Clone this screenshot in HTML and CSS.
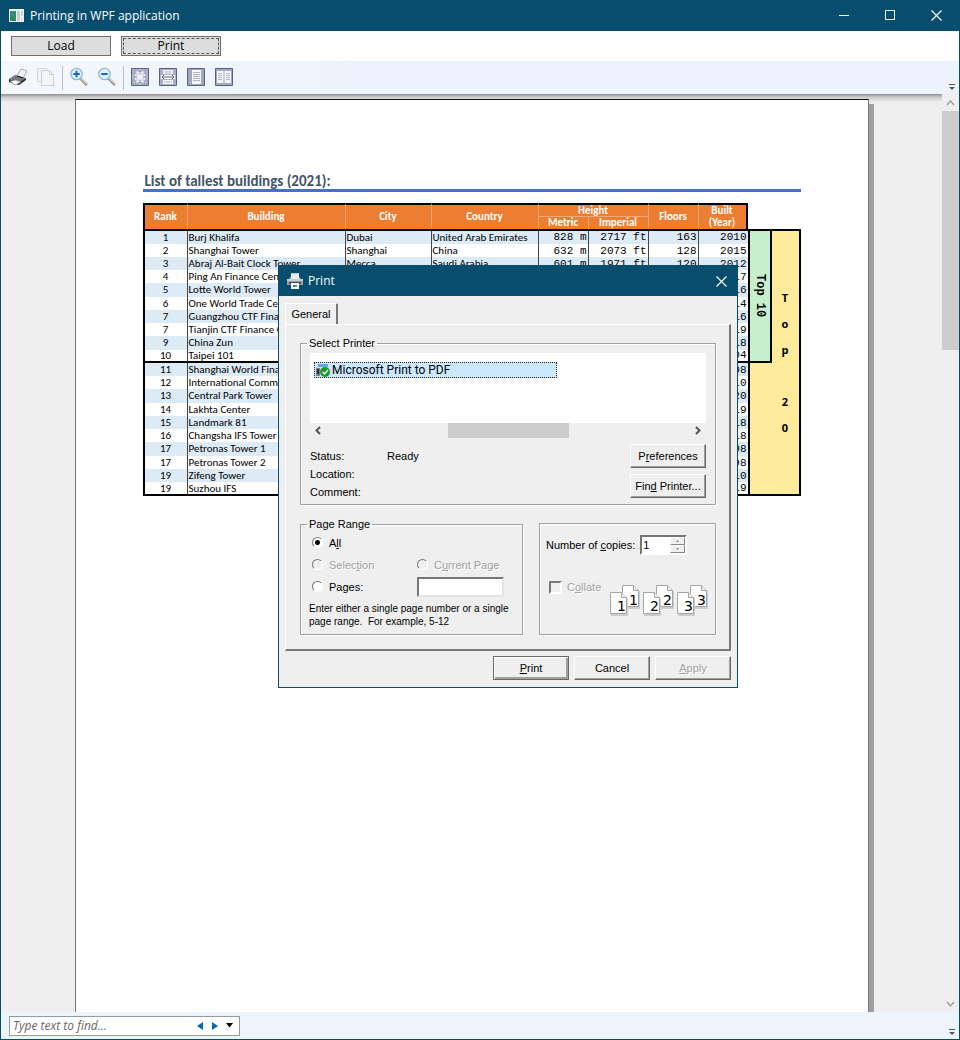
FILE: index.html
```html
<!DOCTYPE html>
<html lang="en">
<head>
<meta charset="utf-8">
<title>Printing in WPF application</title>
<link rel="stylesheet" href="styles.css">
</head>
<body>
<div class="window">
  <header class="titlebar">
    <svg class="app-icon" width="15" height="13" viewBox="0 0 15 13"><path fill="#f4f6f6" d="M0 0h15v13H0z"/><path fill="#2e8a63" d="M1 2h6v10H1z"/><path fill="#4f7fa0" d="M2 2h3v5H2z"/><path fill="#c9cfd2" d="M8 2h3v10H8zM12 2h2v5h-2z"/><path fill="#dfe3e5" d="M12 8h2v4h-2z"/></svg>
    <h1 class="window-title">Printing in WPF application</h1>
    <div class="window-controls">
      <button class="caption-button" aria-label="Minimize"><svg width="11" height="11" viewBox="0 0 11 11"><path d="M0 5.500h10" stroke="#fff"/></svg></button>
      <button class="caption-button" aria-label="Maximize"><svg width="11" height="11" viewBox="0 0 11 11"><path d="M.5.5h9v9h-9z" fill="none" stroke="#fff"/></svg></button>
      <button class="caption-button" aria-label="Close"><svg width="11" height="11" viewBox="0 0 11 11"><path d="M.5.5l10 10M10.500.5l-10 10" stroke="#fff" stroke-width="1.200"/></svg></button>
    </div>
  </header>

  <div class="commands">
    <button class="command">Load</button>
    <button class="command command-focused">Print</button>
  </div>

  <div class="toolbar">
    <button class="tool" aria-label="Print"><svg width="20" height="20" viewBox="0 0 20 20"><path d="M9 9l4-7 6 2-4 7z" fill="#f2f3f5" stroke="#8a8d92" stroke-width=".7"/><path d="M1 12l6-4 11 3-5 4z" fill="#77797e"/><path d="M1 12v3l10 3 7-5v-2l-6 4z" fill="#26272b"/><path d="M2 14l6-1 5 2-6 3z" fill="#fff" stroke="#777" stroke-width=".6"/><path d="M9 9l6 2" stroke="#222" stroke-width="1.300"/></svg></button>
    <button class="tool" aria-label="Copy"><svg width="20" height="20" viewBox="0 0 20 20"><path d="M1.500 1.500h9l4 4v9h-13z" fill="#f2f4f8" stroke="#d3d6db"/><path d="M5.500 3.500h8l4 4v11h-12z" fill="#f4f6f9" stroke="#cdd0d6"/><path d="M13.500 3.500v4h4" fill="none" stroke="#cdd0d6"/></svg></button>
    <span class="tool-separator"></span>
    <button class="tool" aria-label="Zoom in"><svg width="20" height="20" viewBox="0 0 20 20"><path d="M11 11l7 7" stroke="#a5a098" stroke-width="3"/><path d="M12 11l6 6" stroke="#eee3cf" stroke-width="1"/><circle cx="7.500" cy="7" r="5.700" fill="#e0f0fc" stroke="#8db9dc" stroke-width="1.300"/><path d="M7.500 3.800v6.400M4.300 7h6.400" stroke="#1668c0" stroke-width="2"/></svg></button>
    <button class="tool" aria-label="Zoom out"><svg width="20" height="20" viewBox="0 0 20 20"><path d="M11 11l7 7" stroke="#a5a098" stroke-width="3"/><path d="M12 11l6 6" stroke="#eee3cf" stroke-width="1"/><circle cx="7.500" cy="7" r="5.700" fill="#e0f0fc" stroke="#8db9dc" stroke-width="1.300"/><path d="M4.300 7h6.400" stroke="#1668c0" stroke-width="2"/></svg></button>
    <span class="tool-separator"></span>
    <button class="tool" aria-label="Actual size"><svg width="18" height="18" viewBox="0 0 18 18"><path d="M.5.5h17v17H.5z" fill="#a9b0c4" stroke="#56608a"/><path d="M5 3h8v3l2 3-2 3v3H5v-3L3 9l2-3z" fill="#d3d8e4"/><path d="M9 1l3 4H6zM9 17l3-4H6zM1 9l4-3v6zM17 9l-4-3v6z" fill="#fff"/><path d="M9 2.500v3M9 12.500v3M2.500 9h3M12.500 9h3M7.500 4L9 2.500 10.500 4M7.500 14L9 15.500l1.500-1.500M4 7.500L2.500 9 4 10.500M14 7.500L15.500 9 14 10.500" fill="none" stroke="#56608a" stroke-width=".8"/><path d="M6.500 6.500h5v5h-5z" fill="#eef0f5"/></svg></button>
    <button class="tool" aria-label="Fit to width"><svg width="18" height="18" viewBox="0 0 18 18"><path d="M.5.5h17v17H.5z" fill="#a9b0c4" stroke="#56608a"/><path d="M4 2h10v4H4zM4 12h10v4H4z" fill="#f3f4f7"/><path d="M2 7h14v4H2z" fill="#fff"/><path d="M3 9h12M5 7L3 9l2 2M13 7l2 2-2 2" fill="none" stroke="#56608a"/><path d="M5 4h8M5 14h8" stroke="#b5bacb"/></svg></button>
    <button class="tool" aria-label="Whole page"><svg width="18" height="18" viewBox="0 0 18 18"><path d="M.5.5h17v17H.5z" fill="#a2a9be" stroke="#56608a"/><path d="M5 2h9v14H5z" fill="#f6f7f9"/><path d="M6 4.500h7M6 6.500h7M6 8.500h7M6 10.500h7M6 12.500h7" stroke="#b0b6c6"/></svg></button>
    <button class="tool" aria-label="Two pages"><svg width="18" height="18" viewBox="0 0 18 18"><path d="M.5.5h17v17H.5z" fill="#a2a9be" stroke="#56608a"/><path d="M2 3h6.500v12H2zM9.500 3H16v12H9.500z" fill="#f6f7f9"/><path d="M3 5.500h4M3 7.500h4M3 9.500h4M3 11.500h4M11 5.500h4M11 7.500h4M11 9.500h4M11 11.500h4" stroke="#b0b6c6"/></svg></button>
    <svg class="overflow" width="6" height="7" viewBox="0 0 6 7"><path d="M0 .5h6" stroke="#555"/><path d="M0 3h6L3 6z" fill="#555"/></svg>
  </div>

  <main class="viewer">
    <div class="canvas">
      <article class="sheet">
        <h2 class="sheet-title">List of tallest buildings (2021):</h2>
        <table class="buildings">
          <colgroup><col class="c-rank"><col class="c-building"><col class="c-city"><col class="c-country"><col class="c-metric"><col class="c-imperial"><col class="c-floors"><col class="c-built"><col class="c-ten"><col class="c-twenty"></colgroup>
          <thead>
            <tr><th rowspan="2">Rank</th><th rowspan="2">Building</th><th rowspan="2">City</th><th rowspan="2">Country</th><th colspan="2" class="split">Height</th><th rowspan="2">Floors</th><th rowspan="2" class="last">Built<br>(Year)</th><td class="blank" colspan="2" rowspan="2"></td></tr>
            <tr><th>Metric</th><th>Imperial</th></tr>
          </thead>
          <tbody>
            <tr><td>1</td><td>Burj Khalifa</td><td>Dubai</td><td>United Arab Emirates</td><td>828 m</td><td>2717 ft</td><td>163</td><td>2010</td><th class="top-ten" rowspan="10" scope="rowgroup"><span class="sideways">Top 10</span></th><th class="top-twenty" rowspan="20" scope="rowgroup">T<br>o<br>p<br>&nbsp;<br>2<br>0</th></tr>
            <tr><td>2</td><td>Shanghai Tower</td><td>Shanghai</td><td>China</td><td>632 m</td><td>2073 ft</td><td>128</td><td>2015</td></tr>
            <tr><td>3</td><td>Abraj Al-Bait Clock Tower</td><td>Mecca</td><td>Saudi Arabia</td><td>601 m</td><td>1971 ft</td><td>120</td><td>2012</td></tr>
            <tr><td>4</td><td>Ping An Finance Center</td><td>Shenzhen</td><td>China</td><td>599 m</td><td>1965 ft</td><td>115</td><td>2017</td></tr>
            <tr><td>5</td><td>Lotte World Tower</td><td>Seoul</td><td>South Korea</td><td>555 m</td><td>1819 ft</td><td>123</td><td>2016</td></tr>
            <tr><td>6</td><td>One World Trade Center</td><td>New York City</td><td>United States</td><td>541 m</td><td>1776 ft</td><td>104</td><td>2014</td></tr>
            <tr><td>7</td><td>Guangzhou CTF Finance Centre</td><td>Guangzhou</td><td>China</td><td>530 m</td><td>1739 ft</td><td>111</td><td>2016</td></tr>
            <tr><td>7</td><td>Tianjin CTF Finance Centre</td><td>Tianjin</td><td>China</td><td>530 m</td><td>1739 ft</td><td>98</td><td>2019</td></tr>
            <tr><td>9</td><td>China Zun</td><td>Beijing</td><td>China</td><td>528 m</td><td>1732 ft</td><td>109</td><td>2018</td></tr>
            <tr class="cut"><td>10</td><td>Taipei 101</td><td>Taipei</td><td>Taiwan</td><td>508 m</td><td>1667 ft</td><td>101</td><td>2004</td></tr>
            <tr><td>11</td><td>Shanghai World Financial Center</td><td>Shanghai</td><td>China</td><td>492 m</td><td>1614 ft</td><td>101</td><td>2008</td><td class="top-rest" rowspan="10"></td></tr>
            <tr><td>12</td><td>International Commerce Centre</td><td>Hong Kong</td><td>China</td><td>484 m</td><td>1588 ft</td><td>118</td><td>2010</td></tr>
            <tr><td>13</td><td>Central Park Tower</td><td>New York City</td><td>United States</td><td>472 m</td><td>1550 ft</td><td>98</td><td>2020</td></tr>
            <tr><td>14</td><td>Lakhta Center</td><td>St. Petersburg</td><td>Russia</td><td>462 m</td><td>1516 ft</td><td>86</td><td>2019</td></tr>
            <tr><td>15</td><td>Landmark 81</td><td>Ho Chi Minh City</td><td>Vietnam</td><td>461 m</td><td>1513 ft</td><td>81</td><td>2018</td></tr>
            <tr><td>16</td><td>Changsha IFS Tower T1</td><td>Changsha</td><td>China</td><td>452 m</td><td>1483 ft</td><td>88</td><td>2018</td></tr>
            <tr><td>17</td><td>Petronas Tower 1</td><td>Kuala Lumpur</td><td>Malaysia</td><td>452 m</td><td>1483 ft</td><td>88</td><td>1998</td></tr>
            <tr><td>17</td><td>Petronas Tower 2</td><td>Kuala Lumpur</td><td>Malaysia</td><td>452 m</td><td>1483 ft</td><td>88</td><td>1998</td></tr>
            <tr><td>19</td><td>Zifeng Tower</td><td>Nanjing</td><td>China</td><td>450 m</td><td>1476 ft</td><td>89</td><td>2010</td></tr>
            <tr class="end"><td>19</td><td>Suzhou IFS</td><td>Suzhou</td><td>China</td><td>450 m</td><td>1476 ft</td><td>98</td><td>2019</td></tr>
          </tbody>
        </table>
      </article>
    </div>
    <div class="scrollbar">
      <svg width="17" height="17" viewBox="0 0 17 17"><path d="M5 11l3.500-4 3.500 4" fill="none" stroke="#999" stroke-width="1.300"/></svg>
      <div class="scroll-track"><div class="scroll-thumb"></div></div>
      <svg width="17" height="17" viewBox="0 0 17 17"><path d="M5 7l3.500 4L12 7" fill="none" stroke="#999" stroke-width="1.300"/></svg>
    </div>
  </main>

  <footer class="findbar">
    <div class="find">
      <input class="find-input" type="text" placeholder="Type text to find..." aria-label="Find text">
      <button class="find-button" aria-label="Find previous"><svg width="6" height="8" viewBox="0 0 6 8"><path d="M6 0v8L0 4z" fill="#0a63bd"/></svg></button>
      <button class="find-button" aria-label="Find next"><svg width="6" height="8" viewBox="0 0 6 8"><path d="M0 0v8l6-4z" fill="#0a63bd"/></svg></button>
      <button class="find-button" aria-label="Find options"><svg width="7" height="5" viewBox="0 0 7 5"><path d="M0 0h7L3.500 4.500z" fill="#000"/></svg></button>
    </div>
    <svg class="overflow" width="6" height="7" viewBox="0 0 6 7"><path d="M0 .5h6" stroke="#555"/><path d="M0 3h6L3 6z" fill="#555"/></svg>
  </footer>

  <section class="dialog" role="dialog" aria-labelledby="dialog-title">
    <header class="dialog-titlebar">
      <svg width="16" height="16" viewBox="0 0 16 16"><path d="M4 0h8v6H4z" fill="#e9edf0"/><path d="M4.500.5h7" stroke="#bcc3c8"/><path d="M0 6h2l1-2h1v2h8V4h1l1 2h2v6H0z" fill="#9b9fa3"/><path d="M0 6h16v2H0z" fill="#c9cccf"/><path d="M2 9h12v2H2z" fill="#4b4f53"/><path d="M4 10h8v6H4z" fill="#fff"/><path d="M6 12h2v2H6z" fill="#2f79c4"/><path d="M8 12h2v2H8z" fill="#54b04a"/></svg>
      <h2 class="dialog-title" id="dialog-title">Print</h2>
      <button class="dialog-close" aria-label="Close dialog"><svg width="11" height="11" viewBox="0 0 11 11"><path d="M.5.5l10 10M10.500.5l-10 10" stroke="#fff" stroke-width="1.200"/></svg></button>
    </header>
    <div class="dialog-body">
      <button class="tab" role="tab" aria-selected="true">General</button>
      <div class="panel">
        <fieldset class="group group-printer">
          <legend>Select Printer</legend>
          <div class="printers">
            <button class="printer"><svg width="17" height="14" viewBox="0 0 17 14"><path d="M3 1h10v4H3z" fill="#5fa9df"/><path d="M1 4h14l1 3v5H1z" fill="#d7dadc"/><path d="M1 5h4v8H1z" fill="#7c8084"/><path d="M2 6h2v5H2z" fill="#2c2e30"/><circle cx="10" cy="9" r="5" fill="#179a2b"/><path d="M7.500 9l2 2 3.500-4" fill="none" stroke="#fff" stroke-width="1.500"/></svg>Microsoft Print to PDF</button>
          </div>
          <div class="hscroll">
            <svg width="15" height="15" viewBox="0 0 15 15"><path d="M10 4L6.500 7.500 10 11" fill="none" stroke="#555" stroke-width="2"/></svg>
            <div class="hscroll-track"><div class="hscroll-thumb"></div></div>
            <svg width="15" height="15" viewBox="0 0 15 15"><path d="M5 4l3.500 3.500L5 11" fill="none" stroke="#555" stroke-width="2"/></svg>
          </div>
          <div class="printer-info">
            <dl class="facts"><dt>Status:</dt><dd>Ready</dd><dt>Location:</dt><dd></dd><dt>Comment:</dt><dd></dd></dl>
            <div class="printer-actions">
              <button class="button">P<u>r</u>eferences</button>
              <button class="button">Fin<u>d</u> Printer...</button>
            </div>
          </div>
        </fieldset>
        <div class="options">
          <fieldset class="group group-range">
            <legend>Page Range</legend>
            <div class="range-grid">
              <label class="choice choice-all"><input type="radio" name="range" checked><span>A<u>l</u>l</span></label>
              <label class="choice disabled"><input type="radio" name="range" disabled><span>Selec<u>t</u>ion</span></label>
              <label class="choice disabled"><input type="radio" name="range" disabled><span>C<u>u</u>rrent Page</span></label>
              <label class="choice"><input type="radio" name="range"><span>Pa<u>g</u>es:</span></label>
              <input class="sunken pages-input" type="text" aria-label="Page numbers">
            </div>
            <p class="hint">Enter either a single page number or a single<br>page range.&nbsp; For example, 5-12</p>
          </fieldset>
          <fieldset class="group group-copies">
            <div class="copies-row">
              <label for="copies">Number of <u>c</u>opies:</label>
              <div class="spinner">
                <input class="spinner-input" id="copies" type="text" value="1">
                <div class="spinner-buttons">
                  <button class="spin" aria-label="More copies"><svg width="3" height="2" viewBox="0 0 3 2"><path d="M0 2h3L1.500 0z" fill="#888"/></svg></button>
                  <button class="spin" aria-label="Fewer copies"><svg width="3" height="2" viewBox="0 0 3 2"><path d="M0 0h3L1.500 2z" fill="#888"/></svg></button>
                </div>
              </div>
            </div>
            <div class="collate-row">
              <label class="collate disabled"><input type="checkbox" disabled><span>C<u>o</u>llate</span></label>
              <svg class="collate-art" width="99" height="32" viewBox="0 0 99 32">
                <defs><g id="leaf"><path d="M1.500 1.500h11l5 5v17h-16z" fill="#ccc" stroke="#ccc"/><path d="M.5.5h11l5 5v16H.5z" fill="#fff" stroke="#a5a5a5"/><path d="M11.500.5v5h5" fill="#eee" stroke="#a5a5a5"/></g></defs>
                <use href="#leaf" x="12"/><use href="#leaf" y="7"/><text x="19" y="20">1</text><text x="7" y="26">1</text>
                <use href="#leaf" x="46"/><use href="#leaf" x="33" y="7"/><text x="53" y="20">2</text><text x="40" y="26">2</text>
                <use href="#leaf" x="80"/><use href="#leaf" x="67" y="7"/><text x="87" y="20">3</text><text x="74" y="26">3</text>
              </svg>
            </div>
          </fieldset>
        </div>
      </div>
      <div class="dialog-actions">
        <button class="button button-default"><u>P</u>rint</button>
        <button class="button">Cancel</button>
        <button class="button" disabled><u>A</u>pply</button>
      </div>
    </div>
  </section>
</div>
</body>
</html>
```

FILE: styles.css
```css
* { box-sizing: border-box; }
body { margin: 0; font: 12px/16px "Open Sans", "Noto Sans", sans-serif; color: #000; }
button, input { font: inherit; color: inherit; margin: 0; padding: 0; border: 0; background: none; }
h1, h2, p, dl, dd { margin: 0; }
svg { display: block; flex: none; }

.window { position: relative; display: flex; flex-direction: column; height: 100vh; min-height: 700px; border: 1px solid #084d6f; border-top: 0; background: #efefef; overflow: hidden; }
.titlebar { display: flex; align-items: center; height: 31px; flex: none; padding-left: 8px; gap: 6px; background: #074e6e; color: #fff; }
.window-title { font-size: 12px; font-weight: 400; flex: 1; white-space: nowrap; }
.window-controls { display: flex; }
.caption-button { display: grid; place-items: center; width: 46px; height: 31px; }
.commands { display: flex; gap: 10px; height: 30px; flex: none; padding: 5px 10px; background: #fff; }
.command { width: 100px; height: 20px; border: 1px solid #707070; background: #ddd; line-height: 18px; }
.command-focused { outline: 1px dashed #555; outline-offset: -3px; }
.toolbar { display: flex; align-items: center; height: 33px; flex: none; padding: 0 4px 0 7px; background: linear-gradient(90deg, #f4f8fd, #ecf3fc 40%); }
.tool { display: grid; place-items: center; width: 28px; height: 24px; margin-bottom: 1px; }
.tool:first-child { width: 20px; margin-right: 4px; }
.tool-separator { width: 1px; height: 24px; background: #b5bfcd; margin: 0 2px; }
.overflow { margin-left: auto; align-self: flex-end; margin-bottom: 3px; }

.viewer { display: flex; flex: 1; min-height: 0; }
.canvas { flex: 1; display: flex; justify-content: center; padding: 5px 0 0; overflow: hidden; background: linear-gradient(#8e8e8e, #c9c9c9 3px, #efefef 8px); }
.sheet { width: 794px; min-height: 1123px; flex: none; padding: 73px 67px 73px 67px; background: #fff; border: 1px solid #777; border-top-color: #111; box-shadow: 5px 5px 0 #9f9f9f; }
.sheet-title { font: 700 15px/16px Carlito, Calibri, Lato, sans-serif; color: #44546a; border-bottom: 3px solid #4472c4; padding-left: 2px; }
.scrollbar { display: flex; flex-direction: column; width: 17px; flex: none; }
.scroll-track { flex: 1; }
.scroll-thumb { height: 27%; background: #cdcdcd; }

.buildings { width: 100%; margin-top: 11px; table-layout: fixed; border-collapse: separate; border-spacing: 0; font: 11px/12px Carlito, Calibri, Lato, sans-serif; white-space: nowrap; }
.c-rank { width: 44px; } .c-building { width: 158px; } .c-city { width: 86px; } .c-country { width: 107px; } .c-metric { width: 50px; }
.c-imperial { width: 60px; } .c-floors { width: 50px; } .c-built { width: 50px; } .c-ten { width: 24px; } .c-twenty { width: 29px; }
.buildings td, .buildings th { padding: 0; }
.buildings td { height: 13px; overflow: hidden; }
.buildings thead th { height: 12px; background: #ed7d31; color: #fff; font: 700 11px/12px Carlito, Calibri, Lato, sans-serif; border-left: 1px solid #f3a675; }
.buildings thead tr:first-child th { border-top: 2px solid #000; }
.buildings thead tr:first-child th:first-child { border-left: 2px solid #000; }
.buildings thead .split { line-height: 11px; border-bottom: 1px solid #f3a675; }
.buildings thead .last { border-right: 2px solid #000; }
.buildings tbody tr:nth-child(odd) { background: #ddebf7; }
.buildings tbody tr:nth-child(4n+1) td { height: 14px; }
.buildings tbody td { border-left: 1px solid #444; padding: 0 1px; }
.buildings tbody tr:first-child td, .buildings tbody tr:first-child th { border-top: 2px solid #000; }
.buildings tbody tr:first-child td { height: 15px; line-height: 11px; }
.buildings tbody td:first-child { border-left: 2px solid #000; text-align: center; }
.buildings tbody td:nth-child(n+5) { font-family: "Liberation Mono", monospace; text-align: right; }
.buildings .cut td, .buildings .end td { border-bottom: 2px solid #000; line-height: 11px; }
.buildings .end td { height: 14px; }
.buildings .top-ten { background: #c6efce; border-left: 2px solid #000; border-right: 2px solid #000; border-bottom: 2px solid #000; font: 700 12px/14px "Liberation Mono", monospace; }
.sideways { writing-mode: vertical-rl; display: inline-block; vertical-align: middle; }
.buildings .top-twenty { background: #ffeb9c; border-right: 2px solid #000; border-bottom: 2px solid #000; font: 700 11px/26px "Open Sans", sans-serif; }
.buildings tbody .top-rest { background: #ffeb9c; border-left: 2px solid #000; border-bottom: 2px solid #000; }

.findbar { display: flex; align-items: center; height: 27px; flex: none; padding: 0 4px 0 8px; background: #edf4fc; }
.find { display: flex; align-items: center; width: 231px; height: 20px; border: 1px solid #999; background: #fff; padding-right: 2px; }
.find-input { flex: 1; min-width: 0; padding-left: 3px; font-style: italic; outline: 0; }
.find-input::placeholder { color: #666; opacity: 1; }
.find-button { display: grid; place-items: center; width: 15px; height: 16px; }

.dialog { position: absolute; left: 277px; top: 265px; width: 460px; border: 1px solid #084d6f; background: #efefef; font: 11px/14px "Liberation Sans", Arial, sans-serif; }
.dialog-titlebar { display: flex; align-items: center; gap: 5px; height: 30px; padding-left: 8px; background: #074e6e; color: #fff; }
.dialog-title { font: 400 12px/16px "Open Sans", sans-serif; flex: 1; }
.dialog-close { display: grid; place-items: center; width: 31px; height: 30px; }
.dialog-body { padding: 7px 6px; }
.tab { display: block; width: 53px; height: 21px; border: 1px solid #fff; border-right: 2px solid #777; border-bottom: 0; border-radius: 2px 2px 0 0; background: #efefef; }
.panel { border: 1px solid #fff; border-right: 2px solid #777; border-bottom: 2px solid #777; padding: 11px 13px 14px 14px; }
.group { min-width: 0; margin: 0; border: 1px solid #a0a0a0; box-shadow: 1px 1px 0 #fff, inset 1px 1px 0 #fff; }
.group legend { margin-left: -3px; padding: 0 2px; line-height: 14px; }
.group-printer { padding: 3px 9px 3px; }
.printers { height: 70px; padding: 9px 4px; background: #fff; }
.printer { display: flex; align-items: center; width: 243px; height: 16px; border: 1px dotted #222; background: #cce8ff; font: 12px/14px Roboto, sans-serif; text-align: left; }
.hscroll { display: flex; height: 15px; }
.hscroll-track { flex: 1; display: flex; justify-content: center; }
.hscroll-thumb { width: 121px; background: #cdcdcd; }
.printer-info { display: flex; justify-content: space-between; padding-top: 6px; }
.facts { display: grid; grid-template-columns: 77px 1fr; grid-auto-rows: 18px; line-height: 18px; padding-top: 3px; }
.printer-actions { display: flex; flex-direction: column; gap: 6px; }
.button { width: 76px; height: 24px; border: 1px solid; border-color: #fff #696969 #696969 #fff; box-shadow: inset -1px -1px 0 #a0a0a0; background: #efefef; }
.button-default { border-color: #696969; box-shadow: inset 1px 1px 0 #fff, inset -2px -2px 0 #a0a0a0; }
.button:disabled, .disabled { color: #a0a0a0; text-shadow: 1px 1px 0 #fff; }
.options { display: flex; gap: 16px; align-items: flex-end; margin-top: 12px; }
.group-range { flex: 1; padding: 1px 4px 6px 11px; }
.group-range legend { margin-left: -5px; }
.range-grid { display: grid; grid-template-columns: 105px 87px; align-items: center; row-gap: 1px; }
.choice { display: flex; align-items: center; gap: 6px; height: 21px; }
.choice-all { grid-column: 1 / -1; }
.choice input { appearance: none; width: 11px; height: 11px; border: 1px solid; border-color: #777 #fff #fff #777; border-radius: 50%; background: #fff; }
.choice input:checked { background: radial-gradient(circle, #000 2px, #fff 3px); }
.choice input:disabled { background: #efefef; }
.sunken { border: 2px solid; border-color: #777 #e3e3e3 #e3e3e3 #777; background: #fff; width: 87px; height: 20px; }
.hint { margin: 5px 0 0 -3px; font-size: 10px; line-height: 13px; white-space: nowrap; }
.group-copies { width: 177px; height: 112px; padding: 11px 6px 0; }
.copies-row { display: flex; align-items: center; gap: 5px; }
.spinner { display: flex; width: 47px; height: 20px; border: 2px solid; border-color: #777 #fff #fff #777; background: #fff; }
.spinner-input { width: 28px; padding-left: 1px; outline: 0; }
.spinner-buttons { display: grid; flex: 1; }
.spin { display: grid; place-items: center; border: 1px solid; border-color: #fff #888 #888 #fff; background: #efefef; }
.collate-row { display: flex; align-items: flex-start; justify-content: space-between; padding: 30px 0 0 3px; }
.collate { display: flex; align-items: center; gap: 5px; height: 14px; margin-top: -5px; }
.collate input { appearance: none; width: 13px; height: 13px; border: 2px solid; border-color: #777 #fff #fff #777; }
.collate-art { font: 14px "DejaVu Sans", sans-serif; }
.dialog-actions { display: flex; justify-content: flex-end; gap: 5px; padding-top: 5px; }
```
